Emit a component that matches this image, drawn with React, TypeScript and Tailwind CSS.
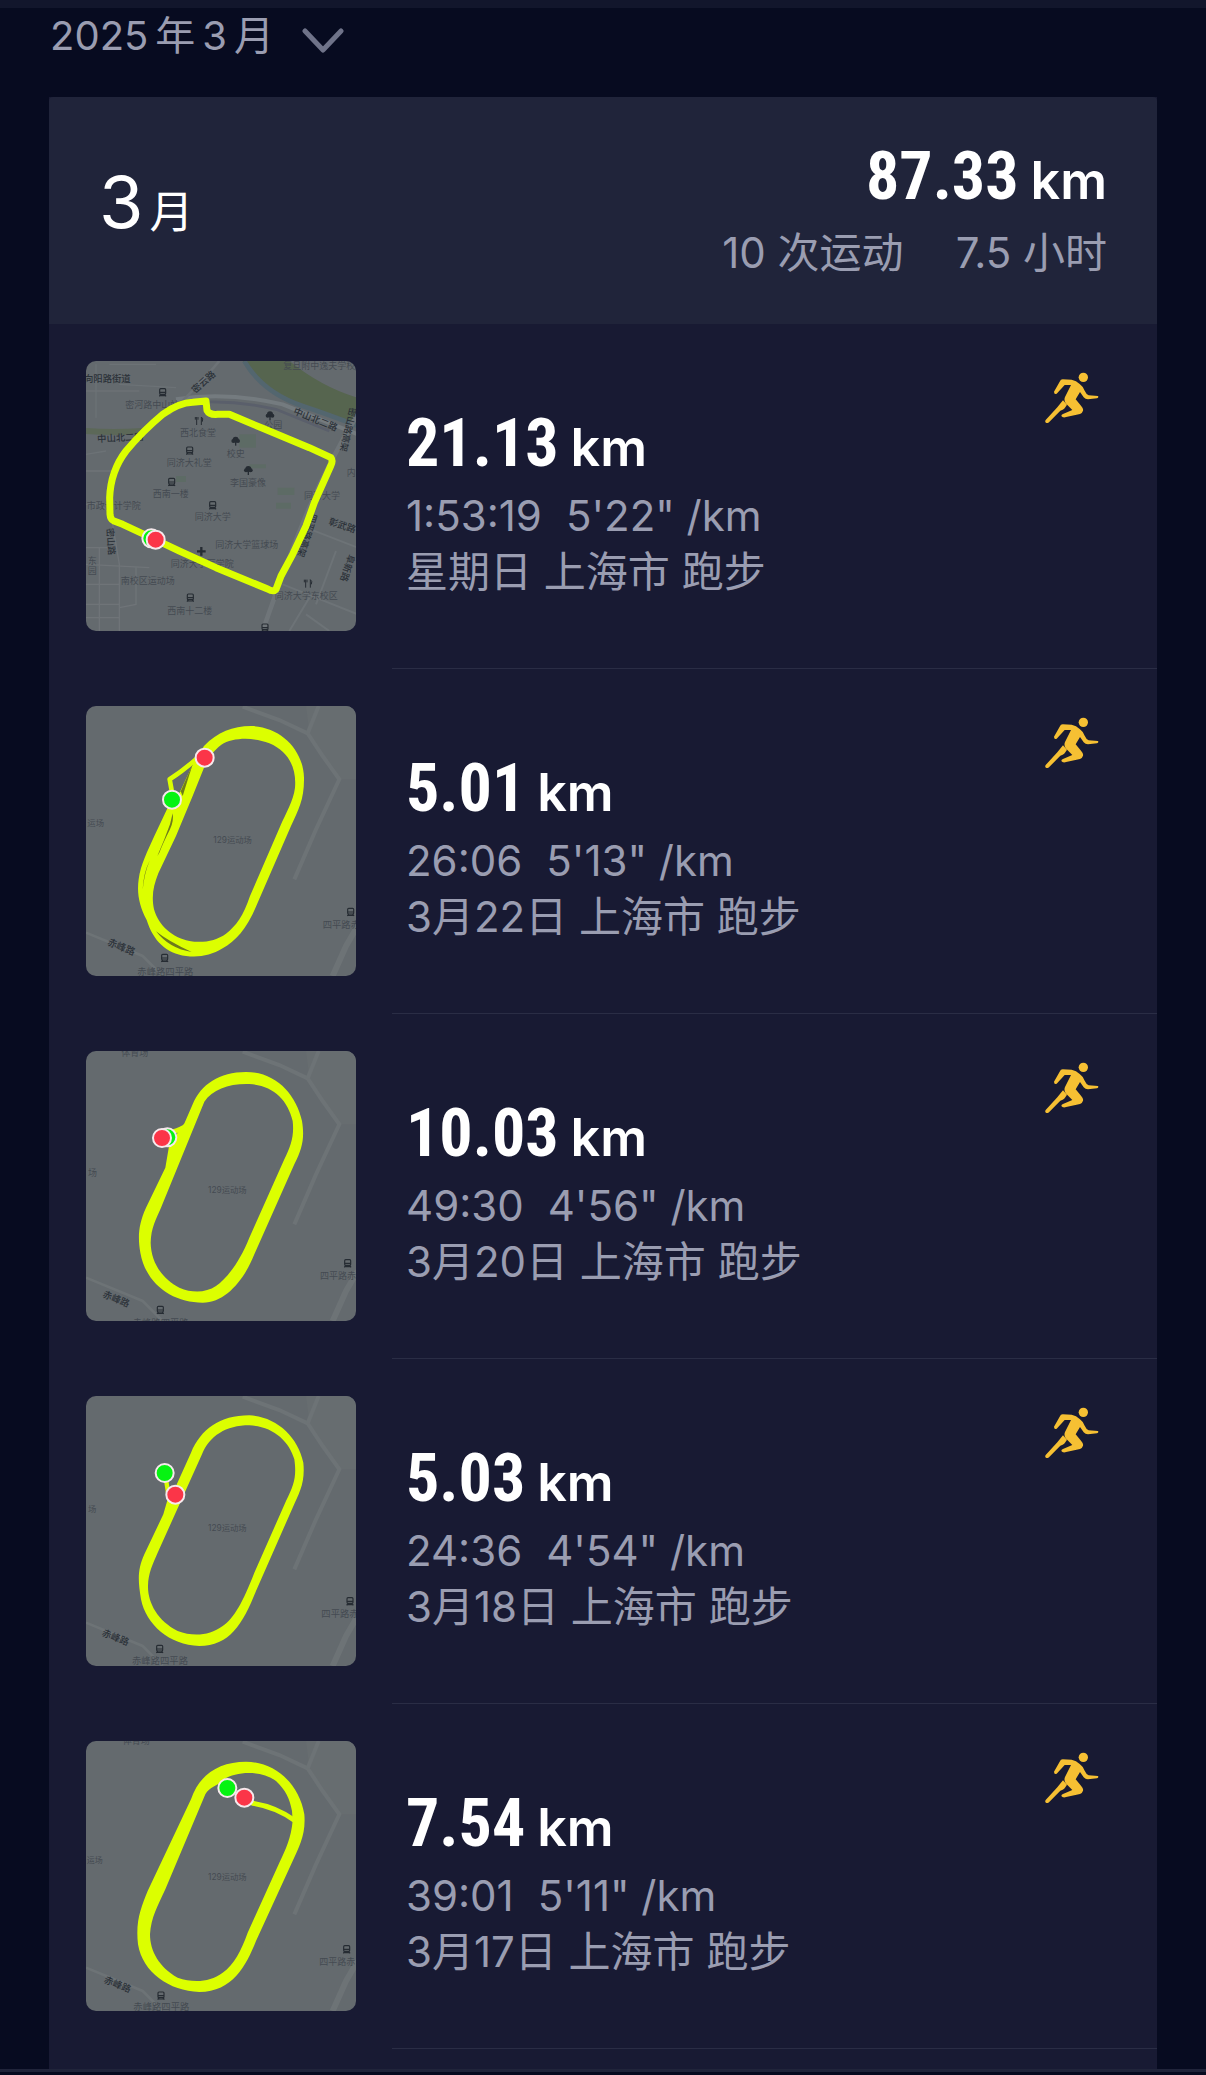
import React from "react";

type Label = { x: number; y: number; text: string; rotate?: number; strong?: boolean; size?: number };
type Dot = { x: number; y: number; color: "red" | "green" };
type MapData = {
  track?: string;
  lines: { d: string; width: number }[];
  gaps?: string[];
  labels: Label[];
  stations: { x: number; y: number; kind?: "tree" | "cross" | "food" }[];
  dots: Dot[];
  campus?: boolean;
};
type Run = { id: string; distance: string; time: string; pace: string; info: string; map: MapData };

const runs: Run[] = [
  {
    id: "r1",
    distance: "21.13",
    time: "1:53:19",
    pace: "5'22\" /km",
    info: "星期日 上海市 跑步",
    map: {
      campus: true,
      lines: [
        {
          d: "M238 566 L140 520 L112 509 Q103 505 102 490 L101 440 Q104 360 150 300 Q200 240 260 190 Q310 155 350 154 L390 150 L393 178 Q400 192 425 190 L460 190 L560 232 L700 290 L765 320 Q772 330 764 345 L715 455 L690 525 L650 610 L615 675 L600 715 Q592 724 575 714 L420 650 L310 600 Z",
          width: 21,
        },
      ],
      labels: [
        { x: 24, y: 93, text: "向阳路街道", strong: true, size: 28 },
        { x: 148, y: 170, text: "密河路中山站", size: 27 },
        { x: 358, y: 128, text: "密云路", rotate: -42, strong: true, size: 28 },
        { x: 64, y: 274, text: "中山北二路", rotate: -3, strong: true, size: 28 },
        { x: 622, y: 54, text: "复旦附中逸夫学校", size: 27 },
        { x: 650, y: 188, text: "中山北二路", rotate: 22, strong: true, size: 28 },
        { x: 822, y: 168, text: "密山路高架", rotate: 103, strong: true, size: 27 },
        { x: 312, y: 256, text: "西北食堂", size: 27 },
        { x: 272, y: 344, text: "同济大礼堂", size: 27 },
        { x: 452, y: 318, text: "校史", size: 27 },
        { x: 565, y: 232, text: "公园", size: 27 },
        { x: 462, y: 406, text: "李国豪像", size: 27 },
        { x: 230, y: 439, text: "西南一楼", size: 27 },
        { x: 356, y: 506, text: "同济大学", size: 27 },
        { x: 32, y: 474, text: "市政设计学院", size: 27 },
        { x: 684, y: 444, text: "同济大学", size: 27 },
        { x: 812, y: 374, text: "内", size: 27 },
        { x: 92, y: 532, text: "密山路", rotate: 86, strong: true, size: 27 },
        { x: 706, y: 486, text: "四平路高架", rotate: 108, strong: true, size: 27 },
        { x: 756, y: 520, text: "彰武路", rotate: 18, strong: true, size: 28 },
        { x: 818, y: 608, text: "阜新路", rotate: 108, strong: true, size: 28 },
        { x: 418, y: 592, text: "同济大学篮球场", size: 27 },
        { x: 284, y: 648, text: "同济大学医学院", size: 27 },
        { x: 134, y: 700, text: "南校区运动场", size: 27 },
        { x: 274, y: 790, text: "西南十二楼", size: 27 },
        { x: 596, y: 744, text: "同济大学东校区", size: 27 },
        { x: 35, y: 640, text: "东", size: 27 },
        { x: 35, y: 670, text: "园", size: 27 },
      ],
      stations: [
        { x: 260, y: 124 },
        { x: 370, y: 209, kind: "food" },
        { x: 341, y: 299 },
        { x: 287, y: 393 },
        { x: 410, y: 463 },
        { x: 479, y: 270, kind: "tree" },
        { x: 517, y: 358, kind: "tree" },
        { x: 582, y: 194, kind: "tree" },
        { x: 376, y: 601, kind: "cross" },
        { x: 697, y: 697, kind: "food" },
        { x: 343, y: 740 },
        { x: 567, y: 830 },
      ],
      dots: [
        { x: 226, y: 562, color: "green" },
        { x: 239, y: 566, color: "red" },
      ],
    },
  },
  {
    id: "r2",
    distance: "5.01",
    time: "26:06",
    pace: "5'13\" /km",
    info: "3月22日 上海市 跑步",
    map: {
      track:
        "M384 150 C425 108 470 90 525 90 C615 92 682 162 684 245 C685 310 668 340 645 390 L545 620 C515 695 480 735 440 757 C405 778 370 785 330 780 C270 772 232 735 212 672 C190 630 182 592 188 550 C194 505 215 465 235 420 L275 335 L310 292 L355 195 Z M436 146 C470 125 530 122 580 142 C638 167 662 215 657 275 C652 315 630 350 612 392 L522 600 C502 660 480 690 450 713 C420 735 380 742 340 735 C290 725 248 690 234 640 C226 600 232 570 247 532 L300 420 L350 300 L384 215 C395 190 408 168 436 146 Z",
      lines: [{ d: "M362 188 Q320 225 281 250 L290 300", width: 14 }],
      gaps: ["M290 352 Q294 375 282 400 Q262 440 250 470 L244 480 Q266 430 282 385 Z", "M240 706 Q275 735 347 768 Q280 758 240 706 Z", "M350 205 L320 300 L314 286 Z", "M222 492 Q205 530 200 582 Q202 530 222 492 Z"],
      labels: [
        { x: 34, y: 389, text: "运场", size: 25 },
        { x: 412, y: 442, text: "129运动场", size: 25 },
        { x: 92, y: 746, text: "赤峰路", rotate: 22, strong: true, size: 29 },
        { x: 184, y: 836, text: "赤峰路四平路", size: 28 },
        { x: 740, y: 695, text: "四平路赤", size: 28 },
      ],
      stations: [{ x: 266, y: 786 }, { x: 824, y: 648 }],
      dots: [
        { x: 386, y: 185, color: "red" },
        { x: 288, y: 311, color: "green" },
      ],
    },
  },
  {
    id: "r3",
    distance: "10.03",
    time: "49:30",
    pace: "4'56\" /km",
    info: "3月20日 上海市 跑步",
    map: {
      track:
        "M350 190 C375 130 430 93 510 93 C600 93 660 160 678 240 C686 290 680 320 655 370 L535 640 C505 715 450 785 380 785 C290 785 210 730 193 635 C185 590 187 550 210 500 L268 380 L280 310 L324 250 Z M385 182 C410 145 460 127 520 129 C590 133 635 175 650 240 C655 285 645 315 625 355 L520 590 C490 665 450 715 420 735 C390 755 350 757 310 740 C260 715 225 665 224 605 C225 560 240 535 255 500 Z",
      lines: [{ d: "M290 272 Q318 266 332 252", width: 14 }],
      labels: [
        { x: 136, y: 46, text: "体育场", size: 27 },
        { x: 36, y: 406, text: "场", size: 27 },
        { x: 396, y: 457, text: "129运动场", size: 25 },
        { x: 78, y: 767, text: "赤峰路", rotate: 22, strong: true, size: 28 },
        { x: 170, y: 856, text: "赤峰路四平路", size: 28 },
        { x: 732, y: 714, text: "四平路赤", size: 27 },
      ],
      stations: [{ x: 253, y: 807 }, { x: 815, y: 667 }],
      dots: [
        { x: 274, y: 289, color: "green" },
        { x: 258, y: 291, color: "red" },
      ],
    },
  },
  {
    id: "r4",
    distance: "5.03",
    time: "24:36",
    pace: "4'54\" /km",
    info: "3月18日 上海市 跑步",
    map: {
      track:
        "M345 200 C375 130 430 88 520 88 C600 92 665 150 682 230 C688 290 670 320 650 365 L540 615 C500 715 460 780 370 780 C280 778 210 715 195 640 C185 580 185 550 205 505 L262 385 L275 340 L300 300 Z M378 205 C400 150 450 118 520 118 C590 120 640 165 655 220 C662 270 655 295 630 345 L535 560 C500 650 475 695 440 720 C400 750 350 752 305 735 C245 705 215 650 216 600 C217 560 230 535 245 500 Z",
      lines: [{ d: "M270 280 L277 325", width: 13 }],
      labels: [
        { x: 36, y: 378, text: "场", size: 25 },
        { x: 396, y: 436, text: "129运动场", size: 25 },
        { x: 76, y: 748, text: "赤峰路", rotate: 22, strong: true, size: 28 },
        { x: 168, y: 834, text: "赤峰路四平路", size: 28 },
        { x: 736, y: 692, text: "四平路赤", size: 28 },
      ],
      stations: [{ x: 251, y: 789 }, { x: 822, y: 646 }],
      dots: [
        { x: 266, y: 261, color: "green" },
        { x: 298, y: 326, color: "red" },
      ],
    },
  },
  {
    id: "r5",
    distance: "7.54",
    time: "39:01",
    pace: "5'11\" /km",
    info: "3月17日 上海市 跑步",
    map: {
      track:
        "M345 205 C370 130 430 92 510 92 C600 94 670 160 685 250 C690 310 670 345 650 390 L540 630 C510 705 470 782 370 783 C280 780 200 725 186 640 C178 570 195 530 215 480 Z M388 190 C400 168 425 165 445 145 C480 120 560 118 600 150 C630 180 640 200 648 240 L650 270 C645 320 630 355 610 395 L515 605 C495 660 475 700 440 725 C400 755 350 755 305 740 C250 710 222 660 222 610 C225 560 245 525 268 475 Z",
      lines: [{ d: "M530 217 Q600 228 655 268", width: 15 }],
      labels: [
        { x: 140, y: 38, text: "体育场", size: 27 },
        { x: 32, y: 396, text: "运场", size: 24 },
        { x: 396, y: 447, text: "129运动场", size: 25 },
        { x: 82, y: 754, text: "赤峰路", rotate: 22, strong: true, size: 28 },
        { x: 172, y: 838, text: "赤峰路四平路", size: 28 },
        { x: 730, y: 701, text: "四平路赤", size: 27 },
      ],
      stations: [{ x: 255, y: 794 }, { x: 812, y: 655 }],
      dots: [
        { x: 454, y: 171, color: "green" },
        { x: 505, y: 200, color: "red" },
      ],
    },
  },
];

function Glyph({ x, y, kind }: { x: number; y: number; kind?: string }) {
  const c = "#262c33";
  if (kind === "tree")
    return (
      <g fill={c}>
        <circle cx={x} cy={y - 4} r="9" />
        <circle cx={x - 7} cy={y} r="6" />
        <circle cx={x + 7} cy={y} r="6" />
        <rect x={x - 2} y={y} width="4" height="14" />
      </g>
    );
  if (kind === "cross") return <path d={`M${x} ${y - 13}v26M${x - 13} ${y}h26`} stroke={c} strokeWidth="7" />;
  if (kind === "food")
    return (
      <path
        d={`M${x - 8} ${y - 11}v24M${x - 12} ${y - 11}v8M${x - 4} ${y - 11}v8M${x + 6} ${y + 13}v-24q7 4 3 14`}
        stroke={c}
        strokeWidth="3"
        fill="none"
      />
    );
  return (
    <g stroke={c} strokeWidth="3.5" fill="none">
      <rect x={x - 9} y={y - 11} width="18" height="17" rx="3" />
      <path d={`M${x - 9} ${y}h18M${x - 6} ${y + 6}l-4 6M${x + 6} ${y + 6}l4 6M${x - 8} ${y + 10}h16`} />
    </g>
  );
}

function CampusBase() {
  return (
    <g fill="none">
      <path d="M500 30 Q560 130 680 165 Q760 190 845 230 V140 Q740 110 640 30 Z" fill="#56654f" />
      <path d="M505 30 Q560 125 680 165 Q770 195 845 225" stroke="#53666f" strokeWidth="14" />
      <path d="M30 240 Q110 246 200 240" stroke="#5c6858" strokeWidth="18" />
      <path d="M300 145 Q450 120 620 160 L845 250" stroke="#747b7f" strokeWidth="12" />
      <path d="M300 160 Q450 140 600 175 L760 240" stroke="#5a5f6b" strokeWidth="8" />
      <path d="M280 190 Q380 90 430 30" stroke="#6d7377" strokeWidth="8" />
      <path d="M845 190 Q760 330 700 470 T560 840" stroke="#6f7579" strokeWidth="14" />
      <path d="M690 530 L845 590 M620 700 L845 790 M700 740 L640 840 M780 600 L720 760 M690 790 L760 840" stroke="#6d7377" strokeWidth="6" />
      <path d="M30 360 H110 M30 460 Q100 450 110 520 L130 640 V840 M30 590 H120 M30 640 L220 650 M30 700 H130 M30 760 H130 M30 800 H130 M70 590 V840 M180 650 V760 L130 770" stroke="#6f7478" strokeWidth="4" />
      <path d="M60 40 V200 M100 40 L240 40 M130 100 L300 110 M30 120 H190 M90 300 L30 310" stroke="#6c7276" strokeWidth="4" />
      <path d="M490 250 h50 v40 h-50z M605 410 h50 v22 h-50z M600 455 h45 v18 h-45z M300 375 h30 v18 h-30z M520 340 h50 v12 h-50z" fill="#5d6b65" />
    </g>
  );
}

function StadiumBase() {
  return (
    <g fill="none" stroke="#6d7376">
      <path d="M690 30 L845 30 V250 L785 250 L700 110 Z" fill="#676d70" stroke="none" />
      <path d="M500 32 L610 72 L695 112 L740 180 L790 250 L720 400 L655 550" strokeWidth="12" />
      <path d="M728 30 L695 112" strokeWidth="12" />
      <path d="M845 690 L810 750 L770 840" strokeWidth="18" />
      <path d="M30 710 L200 780 L260 840" strokeWidth="8" />
    </g>
  );
}

function RouteMap({ map, label }: { map: MapData; label: string }) {
  return (
    <svg viewBox="30 30 810 810" role="img" aria-label={label} className="size-[270px] shrink-0 rounded-[10px] bg-[#646a6e]">
      {map.campus ? <CampusBase /> : <StadiumBase />}
      {map.labels.map((l, i) => (
        <text
          key={i}
          x={l.x}
          y={l.y}
          fontSize={l.size}
          fill={l.strong ? "#2b3138" : "#454b52"}
          fontWeight={l.strong ? 500 : 400}
          transform={l.rotate ? `rotate(${l.rotate} ${l.x} ${l.y})` : undefined}
        >
          {l.text}
        </text>
      ))}
      {map.stations.map((s, i) => (
        <Glyph key={i} {...s} />
      ))}
      {map.track && <path d={map.track} fill="#dcff00" fillRule="evenodd" />}
      {map.lines.map((l, i) => (
        <path key={i} d={l.d} stroke="#dcff00" strokeWidth={l.width} fill="none" strokeLinejoin="round" strokeLinecap="round" />
      ))}
      {map.gaps?.map((d, i) => <path key={i} d={d} fill="#6e7a1c" />)}
      {map.dots.map((d, i) => (
        <circle key={i} cx={d.x} cy={d.y} r="27" fill={d.color === "red" ? "#fb3548" : "#06f312"} stroke="#f6e9ec" strokeWidth="6" />
      ))}
    </svg>
  );
}

function Runner() {
  return (
    <svg viewBox="44 37 162 153" className="h-[51px] w-[54px] shrink-0" fill="#f6c033" aria-hidden="true">
      <circle cx="159" cy="53" r="14" />
      <path d="M97 59 L124 60 Q138 63 148 73 Q158 80 163 93 Q168 104 175 107 L203 109 Q206 114 200 116 L173 119 Q165 119 160 113 L149 97 L136 119 L152 138 Q160 147 158 153 Q156 160 149 163 L104 173 Q96 174 93 169 Q93 165 98 163 L126 151 L106 131 Q100 121 104 112 L122 76 L103 76 L79 102 Q71 105 71 96 L88 66 Q91 59 97 59 Z" />
      <path d="M98 122 L110 135 L105 143 Q102 148 97 150 L90 153 L56 188 Q49 193 45 187 Q44 184 46 181 L81 143 Z" />
    </svg>
  );
}

function Distance({ value }: { value: string }) {
  return (
    <p className="flex items-baseline gap-3 text-white">
      <span className="font-['Roboto_Condensed',Roboto,sans-serif] text-[66px] font-bold leading-[72px]">{value}</span>
      <span className="text-[52px] font-semibold leading-[72px]">km</span>
    </p>
  );
}

export default function App() {
  return (
    <main className="min-h-screen bg-[#070b20] font-[Inter,'Noto_Sans_CJK_SC',sans-serif] text-[#9a9db1]">
      <div className="h-2 bg-[#12162c]" />
      <button type="button" className="ml-[50px] flex h-[89px] items-start gap-7 text-[40px] leading-[56px]">
        <span className="flex gap-[7px]">
          <span>2025</span>
          <span>年</span>
          <span>3</span>
          <span>月</span>
        </span>
        <svg viewBox="0 0 42 26" className="mt-5 h-[26px] w-[42px]" fill="none" stroke="#6f7389" strokeWidth="5" strokeLinecap="round" strokeLinejoin="round" aria-hidden="true">
          <path d="M3 3 L21 22 L39 3" />
        </svg>
      </button>

      <section className="mx-[49px] bg-[#181a33]">
        <header className="flex h-[227px] items-start justify-between rounded-t-sm bg-[#20243a] px-[50px] pt-11">
          <h1 className="flex items-baseline gap-1.5 pt-4 text-[72px] leading-[90px] text-white">
            <span>3</span>
            <span className="text-[44px]">月</span>
          </h1>
          <div className="flex flex-col items-end">
            <Distance value="87.33" />
            <p className="mt-2 flex gap-[52px] text-[42px] leading-[56px]">
              <span>10 次运动</span>
              <span>7.5 小时</span>
            </p>
          </div>
        </header>

        <ul>
          {runs.map((run) => (
            <li key={run.id} className="flex h-[345px] pl-[37px]">
              <div className="pt-[37px]">
                <RouteMap map={run.map} label={`${run.distance} km ${run.info}`} />
              </div>
              <div className="ml-9 flex flex-1 justify-between border-b border-[#2a2d45] pl-3.5 pr-[58px]">
                <div className="pt-[84px]">
                  <Distance value={run.distance} />
                  <p className="mt-1 flex gap-6 text-[42px] leading-[56px]">
                    <span>{run.time}</span>
                    <span>{run.pace}</span>
                  </p>
                  <p className="text-[42px] leading-[56px]">{run.info}</p>
                </div>
                <div className="pt-12">
                  <Runner />
                </div>
              </div>
            </li>
          ))}
        </ul>
        <div className="h-5" />
      </section>
      <div className="h-[3px] bg-[#20243a]" />
    </main>
  );
}
